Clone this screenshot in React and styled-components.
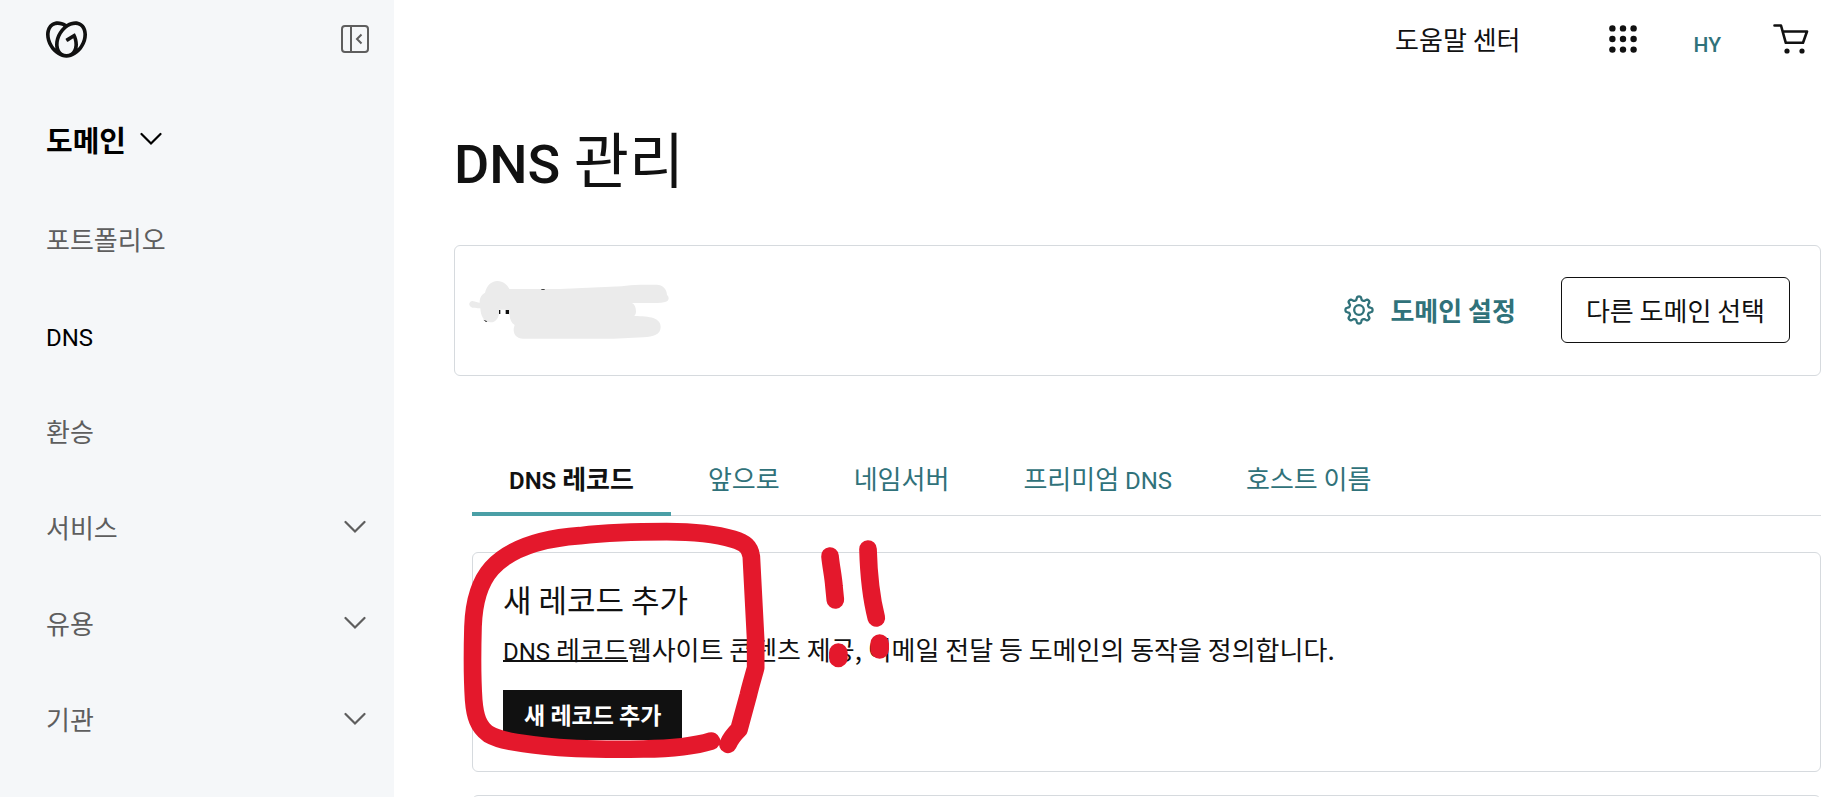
import React from "react";
import styled, { createGlobalStyle } from "styled-components";
import { SiGodaddy } from "react-icons/si";

const GlobalStyle = createGlobalStyle`
  * {
    box-sizing: border-box;
  }
  body {
    margin: 0;
    background: #fff;
    color: #111;
    font-family: "Noto Sans CJK KR", sans-serif;
    font-size: 26px;
    line-height: 32px;
  }
  button {
    font: inherit;
    color: inherit;
    border: 0;
    padding: 0;
    background: none;
    cursor: pointer;
  }
  a {
    color: inherit;
    text-decoration: none;
  }
  svg {
    display: block;
    flex-shrink: 0;
  }
`;

const Layout = styled.div`
  display: flex;
  height: 100vh;
  overflow: hidden;
`;

const Latin = styled.span`
  font-family: Roboto, sans-serif;
  font-size: ${({ $size }) => $size || 24}px;
  font-weight: ${({ $weight }) => $weight || 400};
  line-height: 1;
`;

/* sidebar */
const Sidebar = styled.aside`
  flex: 0 0 394px;
  padding: 0 25px 0 46px;
  background: #f5f7f9;
`;

const SidebarTop = styled.div`
  display: flex;
  align-items: center;
  justify-content: space-between;
  height: 78px;
`;

const SectionButton = styled.button`
  display: flex;
  align-items: center;
  gap: 14px;
  margin-top: 45px;
  color: #000;
  font-size: 29px;
  font-weight: 700;
`;

const NavList = styled.ul`
  margin: 36px 0 0;
  padding: 0;
  list-style: none;
`;

const NavItem = styled.a`
  display: flex;
  align-items: center;
  justify-content: space-between;
  height: 96px;
  padding-right: 3px;
  color: ${({ $active }) => ($active ? "#000" : "#5e5e5e")};
`;

/* main */
const Main = styled.main`
  flex: 1;
  min-width: 0;
  padding: 0 21px 0 60px;
`;

const TopBar = styled.header`
  display: flex;
  align-items: center;
  justify-content: flex-end;
  height: 78px;
  padding-right: 12px;
`;

const HelpLink = styled.a`
  margin-right: 88px;
`;

const IconButton = styled.button`
  display: flex;
`;

const Account = styled.button`
  margin: 4px 52px 0 57px;
  color: #30727a;
`;

const Title = styled.h1`
  margin: 38px 0 47px;
  font-size: 60px;
  font-weight: 400;
  line-height: 82px;
`;

const DomainCard = styled.section`
  display: flex;
  align-items: center;
  justify-content: space-between;
  height: 131px;
  padding: 0 30px 2px 14px;
  border: 1px solid #d6dade;
  border-radius: 6px;
`;

const DomainActions = styled.div`
  display: flex;
  align-items: center;
  gap: 45px;
`;

const SettingsLink = styled.a`
  display: flex;
  align-items: center;
  gap: 16px;
  color: #30727a;
  font-weight: 700;
`;

const OutlineButton = styled.button`
  height: 66px;
  padding: 0 24px;
  border: 1px solid #111;
  border-radius: 6px;
`;

const Records = styled.div`
  position: relative;
  margin: 64px 0 0 18px;
`;

const Tabs = styled.nav`
  display: flex;
  height: 76px;
  border-bottom: 1px solid #d6dade;
`;

const Tab = styled.a`
  height: 76px;
  padding: 22px 37px 0;
  border-bottom: 4px solid ${({ $active }) => ($active ? "#4a9fa6" : "transparent")};
  color: ${({ $active }) => ($active ? "#111" : "#30727a")};
  font-weight: ${({ $active }) => ($active ? 700 : 400)};
  white-space: nowrap;
`;

const Card = styled.section`
  height: 220px;
  margin-top: ${({ $gap }) => $gap}px;
  padding: 28px 30px;
  border: 1px solid #d6dade;
  border-radius: 6px;
`;

const CardTitle = styled.h2`
  margin: 0 0 16px;
  font-size: 31px;
  font-weight: 400;
  line-height: 36px;
`;

const Description = styled.p`
  margin: 0 0 25px;
`;

const TextLink = styled.a`
  display: inline-block;
  height: 29px;
  border-bottom: 2px solid #111;
`;

const AddButton = styled.button`
  height: 50px;
  padding: 0 21px 2px;
  background: #111;
  color: #fff;
  font-size: 23px;
  font-weight: 700;
`;

const Marker = styled.svg`
  position: absolute;
  top: 0;
  left: -32px;
  pointer-events: none;
`;

const Chevron = () => (
  <svg width="22" height="14" viewBox="0 0 22 14" fill="none" stroke="currentColor" strokeWidth="2.2">
    <path d="M1.5 2 11 11.5 20.5 2" strokeLinecap="round" />
  </svg>
);

const CollapseIcon = () => (
  <svg width="28" height="28" viewBox="0 0 28 28" fill="none" stroke="#5e5e5e" strokeWidth="2">
    <rect x="1" y="1" width="26" height="26" rx="3" />
    <path d="M10 1v26M20.5 9.5 16 14l4.5 4.5" />
  </svg>
);

const AppsIcon = () => (
  <svg width="28" height="28" viewBox="0 0 28 28" fill="#111">
    {[3.4, 14, 24.6].map((y) => [3.4, 14, 24.6].map((x) => <circle key={`${x}-${y}`} cx={x} cy={y} r="3.2" />))}
  </svg>
);

const CartIcon = () => (
  <svg width="36" height="30" viewBox="0 0 36 30" fill="none" stroke="#111" strokeWidth="2.6">
    <path d="M1.5 1.5h6.5l4.8 17.3h17.2l4-11.3H9.7" strokeLinejoin="round" strokeLinecap="round" />
    <circle cx="14" cy="27" r="2.6" fill="#111" stroke="none" />
    <circle cx="29" cy="27" r="2.6" fill="#111" stroke="none" />
  </svg>
);

// eight rounded teeth around the hub
const gearPath = Array.from({ length: 96 }, (_, i) => {
  const a = (i / 96) * Math.PI * 2;
  const r = 11.8 + 1.8 * Math.tanh(2 * Math.cos(8 * a));
  return `${i ? "L" : "M"}${(15 + r * Math.cos(a)).toFixed(2)} ${(15 + r * Math.sin(a)).toFixed(2)}`;
}).join("");

const GearIcon = () => (
  <svg width="30" height="30" viewBox="0 0 30 30" fill="none" stroke="currentColor" strokeWidth="2.3" strokeLinejoin="round">
    <path d={`${gearPath}Z`} />
    <circle cx="15" cy="15" r="4.8" />
  </svg>
);

const HiddenDomain = () => (
  <svg width="200" height="60" viewBox="87 507 600 180">
    <path
      fill="#ebebeb"
      d="M97 570C108 571 112 575 119 575C119 558 126 550 135 545C140 525 153 510 172 510C190 510 202 522 208 534L360 534L545 526Q570 521 600 521H650C668 521 681 535 681 552C690 560 686 571 675 573Q665 576 650 576H576C584 580 588 590 588 602Q588 609 583 615C630 616 662 620 662 648C662 670 640 678 610 679L520 683H250C230 683 221 670 221 657Q221 650 224 642C214 636 209 625 209 612L196 596H178C178 618 170 634 151 634C132 634 122 615 121 592C112 590 97 593 92 587C83 580 90 570 97 570Z"
    />
    <path fill="#111" d="M197 597h10v12h-10zM177 597h4v12h-4zM304 534h10v2h-10zM130 626l12 5-4 2z" />
  </svg>
);

const menu = [
  { label: "포트폴리오" },
  { label: "DNS", active: true },
  { label: "환승" },
  { label: "서비스", more: true },
  { label: "유용", more: true },
  { label: "기관", more: true },
];

const App = () => (
  <Layout>
    <GlobalStyle />
    <Sidebar>
      <SidebarTop>
        <a href="#home" aria-label="GoDaddy">
          <SiGodaddy size={41} color="#111" />
        </a>
        <IconButton aria-label="메뉴 접기">
          <CollapseIcon />
        </IconButton>
      </SidebarTop>
      <SectionButton>
        도메인
        <Chevron />
      </SectionButton>
      <NavList>
        {menu.map(({ label, active, more }) => (
          <li key={label}>
            <NavItem href="#menu" $active={active}>
              <span>{active ? <Latin>{label}</Latin> : label}</span>
              {more && <Chevron />}
            </NavItem>
          </li>
        ))}
      </NavList>
    </Sidebar>
    <Main>
      <TopBar>
        <HelpLink href="#help">도움말 센터</HelpLink>
        <IconButton aria-label="앱">
          <AppsIcon />
        </IconButton>
        <Account>
          <Latin $size={21} $weight={500}>HY</Latin>
        </Account>
        <IconButton aria-label="장바구니">
          <CartIcon />
        </IconButton>
      </TopBar>
      <Title>
        <Latin $size={54} $weight={500}>DNS</Latin> 관리
      </Title>
      <DomainCard>
        <HiddenDomain />
        <DomainActions>
          <SettingsLink href="#settings">
            <GearIcon />
            도메인 설정
          </SettingsLink>
          <OutlineButton>다른 도메인 선택</OutlineButton>
        </DomainActions>
      </DomainCard>
      <Records>
        <Tabs>
          <Tab href="#records" $active>
            <Latin $weight={600}>DNS</Latin> 레코드
          </Tab>
          <Tab href="#forwarding">앞으로</Tab>
          <Tab href="#nameservers">네임서버</Tab>
          <Tab href="#premium">
            프리미엄 <Latin>DNS</Latin>
          </Tab>
          <Tab href="#hostnames">호스트 이름</Tab>
        </Tabs>
        <Card $gap={36}>
          <CardTitle>새 레코드 추가</CardTitle>
          <Description>
            <TextLink href="#about">
              <Latin>DNS</Latin> 레코드
            </TextLink>
            웹사이트 콘텐츠 제공, 이메일 전달 등 도메인의 동작을 정의합니다.
          </Description>
          <AddButton>새 레코드 추가</AddButton>
        </Card>
        <Card $gap={23} />
        <Marker
          width="480"
          height="357"
          viewBox="0 0 1440 1071"
          fill="none"
          stroke="#e4182c"
          strokeWidth="53"
          strokeLinecap="round"
          strokeLinejoin="round"
        >
          <path d="M814 903C760 920 690 926 610 927C500 929 400 928 310 918C230 909 180 902 145 882C115 860 105 830 101 780C97 720 97 630 99 560C101 500 115 430 155 385C210 325 310 295 420 287C510 277 590 275 680 275C750 275 820 280 880 298C915 309 930 320 934 350L947 600V683C940 710 932 735 925 765L897 868C880 885 870 900 864 913" />
          <path d="M1170 348C1173 380 1180 410 1182 440L1186 480M1284 327C1286 400 1290 460 1309 534" />
          <path strokeWidth="56" d="M1195 638V654M1319 611V628" />
        </Marker>
      </Records>
    </Main>
  </Layout>
);

export default App;
